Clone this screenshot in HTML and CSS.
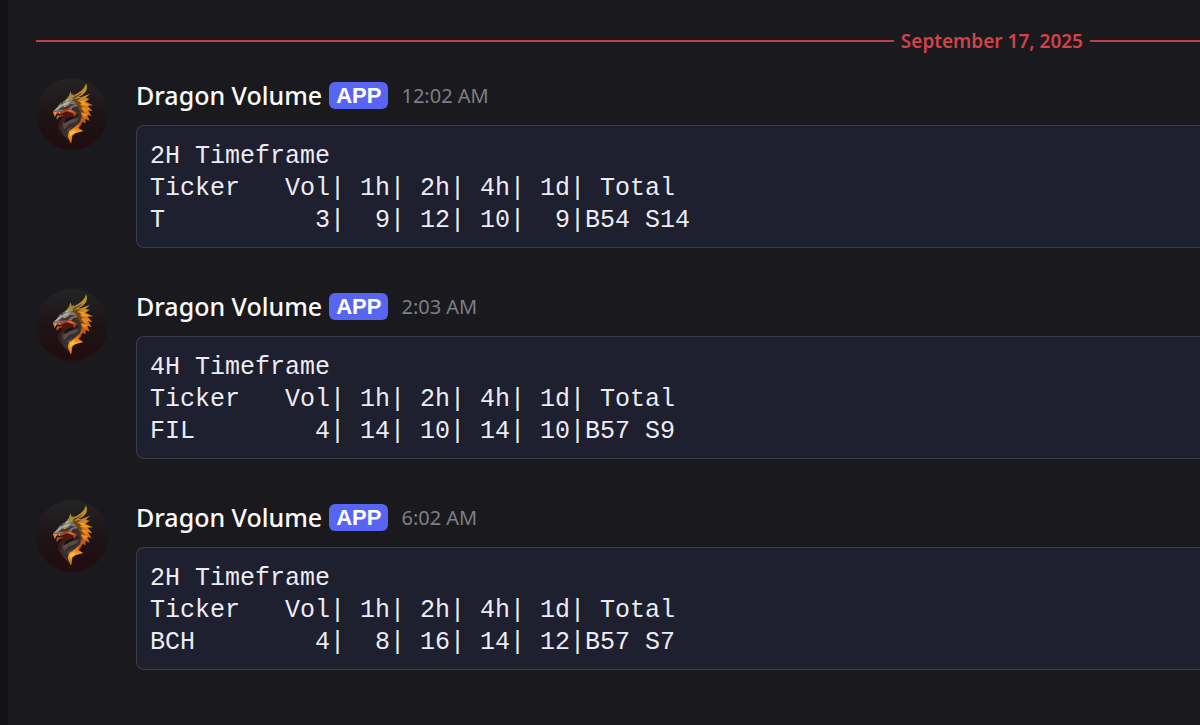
FILE: index.html
```html
<!DOCTYPE html>
<html lang="en">
<head>
  <meta charset="utf-8">
  <title>Dragon Volume</title>
  <link rel="stylesheet" href="styles.css">
</head>
<body>
  <svg class="defs" aria-hidden="true">
    <defs>
      <linearGradient id="disc" x1="0" y1="0" x2="0" y2="1">
        <stop offset="0" stop-color="#242425"/>
        <stop offset=".5" stop-color="#1d1416"/>
        <stop offset="1" stop-color="#210c0e"/>
      </linearGradient>
      <linearGradient id="horn" x1="0" y1="1" x2="1" y2="0">
        <stop offset="0" stop-color="#8f8a72"/>
        <stop offset=".6" stop-color="#c88a22"/>
        <stop offset="1" stop-color="#a89a2c"/>
      </linearGradient>
      <linearGradient id="mane" x1="0" y1="0" x2="0" y2="1">
        <stop offset="0" stop-color="#b98c2c"/>
        <stop offset=".5" stop-color="#e07a1c"/>
        <stop offset="1" stop-color="#a83c12"/>
      </linearGradient>
      <linearGradient id="flame" x1="0" y1="0" x2="0" y2="1">
        <stop offset="0" stop-color="#c44c12"/>
        <stop offset=".5" stop-color="#f39a2a"/>
        <stop offset="1" stop-color="#e2661a"/>
      </linearGradient>
    </defs>
    <symbol id="dragon" viewBox="15 24 216 216">
      <circle cx="123" cy="132" r="108" fill="url(#disc)"/>
      <!-- mane -->
      <path fill="url(#mane)" d="M124 90L138 80L150 82L177 71L164 84L176 86L163 95L186 106L170 107L184 124L171 121L182 139L169 134L176 152L163 147L164 160L154 156L149 168L139 177L148 151L139 125L130 104Z"/>
      <path fill="#75420f" d="M124 88L151 83L138 93L158 99L145 103L166 116L149 114L164 132L149 127L157 148L144 137L139 118L130 103Z"/>
      <path fill="#f29a2a" d="M145 94L168 90L158 97L176 106L155 105ZM149 109L176 120L160 118L168 129ZM151 127L174 135L162 136L166 147Z"/>
      <!-- horns -->
      <path fill="url(#horn)" d="M106 92C119 85 128 76 141 69C154 61 161 54 165 40C172 55 166 67 153 76C142 83 131 82 121 94Z"/>
      <path fill="#5a4d20" d="M124 84C135 76 145 74 154 66C150 76 138 79 126 88Z"/>
      <path fill="#a68b38" d="M103 91L114 77L118 64L123 76L129 70L127 81L116 94Z"/>
      <!-- neck -->
      <path fill="#34302f" d="M121 100L139 109L149 127L150 148L141 164L125 176L113 183L115 213L99 199L88 178L89 161L99 148L119 138L126 121Z"/>
      <path fill="#501611" d="M91 128L112 118L128 123L125 137L100 147L88 160L87 179L100 200L90 190L81 174L83 157L93 144Z"/>
      <path fill="#5b4a43" d="M95 161L117 149L143 144L137 154L114 163L99 178ZM106 182L125 169L113 184Z"/>
      <path fill="#171315" d="M102 148L131 135L145 136L121 148L99 160Z"/>
      <!-- head -->
      <path fill="#77756f" d="M66 124L77 114L86 101L99 92L117 88L132 97L139 109L127 111L119 121L106 118L92 126L76 132L67 133Z"/>
      <path fill="#b3ac9b" d="M69 122L83 109L101 98L121 94L108 105L93 107L79 119ZM101 91L120 85L108 96Z"/>
      <path fill="#39383a" d="M82 119L94 111L109 109L120 101L133 104L121 108L112 117L97 119ZM89 100L98 95L94 103Z"/>
      <path fill="#f0a332" d="M97 109L106 106L102 112Z"/>
      <!-- jaws -->
      <path fill="#b03e1b" d="M66 124L78 126L94 123L112 116L123 119L137 127L131 142L125 130L108 124L88 133L77 129L72 141Z"/>
      <path fill="#e8742a" d="M66 125L80 127L76 131L71 140ZM104 120L121 121L133 130L120 126Z"/>
      <path fill="#a3512a" d="M74 143L90 134L96 137L84 142L79 149Z"/>
      <path fill="#f2bd72" d="M72 127L76 127L75 135ZM83 127L87 126L86 132ZM78 141L81 134L83 139Z"/>
      <!-- flame under the neck -->
      <path fill="url(#flame)" d="M118 218L110 198L114 183L128 173L139 164L151 153L142 174L157 183L133 190L124 197L121 219Z"/>
      <path fill="#ffc34b" d="M116 203L118 187L133 176L128 186L142 183L123 193Z"/>
    </symbol>
  </svg>

  <main class="chat">
    <div class="divider">
      <span class="divider-date">September 17, 2025</span>
    </div>

    <article class="message">
      <svg class="avatar" role="img" aria-label="Dragon Volume"><use href="#dragon"/></svg>
      <div class="content">
        <header class="header">
          <span class="username">Dragon Volume</span>
          <span class="app-tag">APP</span>
          <time class="timestamp">12:02 AM</time>
        </header>
        <pre class="code">2H Timeframe
Ticker   Vol| 1h| 2h| 4h| 1d| Total
T          3|  9| 12| 10|  9|B54 S14</pre>
      </div>
    </article>

    <article class="message">
      <svg class="avatar" role="img" aria-label="Dragon Volume"><use href="#dragon"/></svg>
      <div class="content">
        <header class="header">
          <span class="username">Dragon Volume</span>
          <span class="app-tag">APP</span>
          <time class="timestamp">2:03 AM</time>
        </header>
        <pre class="code">4H Timeframe
Ticker   Vol| 1h| 2h| 4h| 1d| Total
FIL        4| 14| 10| 14| 10|B57 S9</pre>
      </div>
    </article>

    <article class="message">
      <svg class="avatar" role="img" aria-label="Dragon Volume"><use href="#dragon"/></svg>
      <div class="content">
        <header class="header">
          <span class="username">Dragon Volume</span>
          <span class="app-tag">APP</span>
          <time class="timestamp">6:02 AM</time>
        </header>
        <pre class="code">2H Timeframe
Ticker   Vol| 1h| 2h| 4h| 1d| Total
BCH        4|  8| 16| 14| 12|B57 S7</pre>
      </div>
    </article>
  </main>
</body>
</html>
```
FILE: styles.css
```css
* {
  box-sizing: border-box;
}
body {
  margin: 0;
  background-color: #1a1a1e;
  color: #fbfbfb;
  font-family: "Noto Sans", sans-serif;
}
.defs {
  display: block;
  width: 0;
  height: 0;
}
.chat {
  min-height: 100vh;
  border-left: 8px solid #121214;
  padding: 28px 0 0 28px;
}
.divider {
  display: flex;
  align-items: center;
  gap: 7px;
  height: 26px;
  margin-bottom: 24px;
  color: #cf4349;
  font-size: 19px;
  font-weight: 600;
  line-height: 26px;
}
.divider::before,
.divider::after {
  content: "";
  height: 2px;
  background-color: #bd4044;
}
.divider::before {
  flex: 1;
}
.divider::after {
  width: 110px;
}
.message {
  display: flex;
  gap: 28px;
  margin-bottom: 41px;
}
.avatar {
  flex: none;
  width: 72px;
  height: 72px;
}
.content {
  flex: 1;
  min-width: 0;
}
.header {
  display: flex;
  align-items: center;
  height: 34px;
  margin-bottom: 13px;
}
.username {
  font-size: 25px;
  font-weight: 500;
}
.app-tag {
  margin: 0 13px 0 7px;
  padding: 0 7px;
  border-radius: 6px;
  background-color: #5865f2;
  color: #ffffff;
  font-family: "Liberation Sans", sans-serif;
  font-size: 22px;
  font-weight: 700;
  line-height: 27px;
}
.timestamp {
  color: #7d7e86;
  font-size: 20px;
}
.code {
  margin: 0;
  padding: 15px 13px 10px;
  border: 1px solid #3d3d46;
  border-right: 0;
  border-radius: 8px 0 0 8px;
  background-color: #1e1f2f;
  color: #ececf4;
  font-family: "Liberation Mono", monospace;
  font-size: 25px;
  line-height: 32px;
}
```
